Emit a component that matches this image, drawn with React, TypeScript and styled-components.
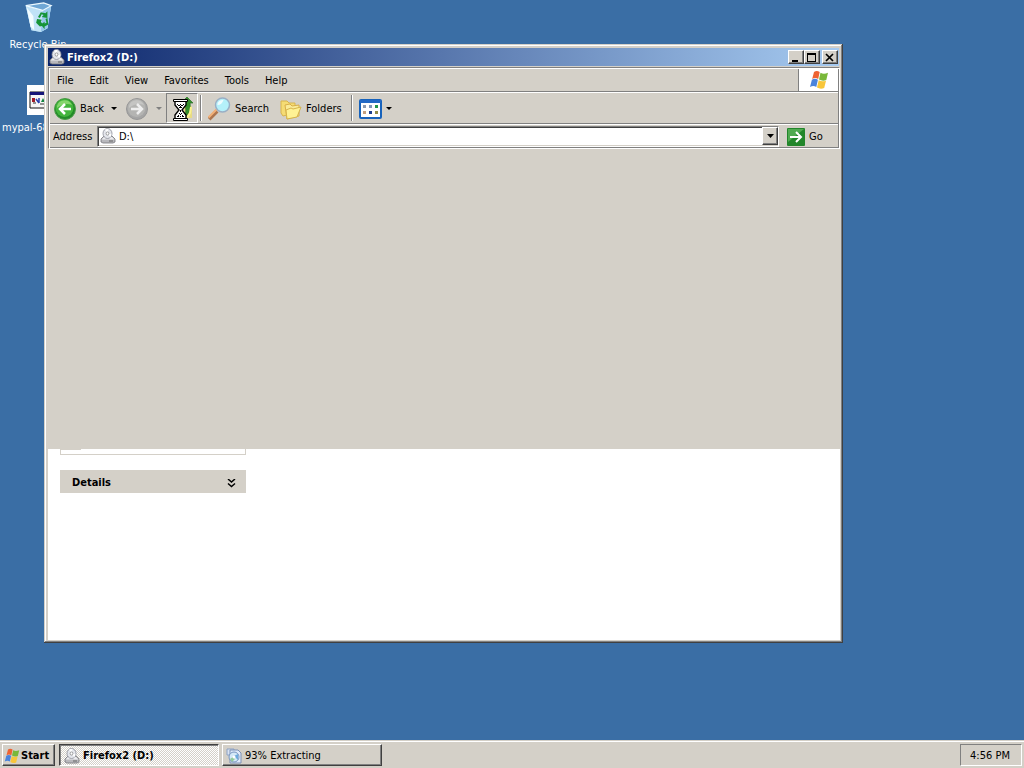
import React from 'react';
import styled, { createGlobalStyle, css } from 'styled-components';

const face = '#d4d0c8';
const shadow = '#808080';

const GlobalStyle = createGlobalStyle`
  * { box-sizing: border-box; }
  html, body, #root { height: 100%; }
  body {
    margin: 0;
    overflow: hidden;
    background: #3a6ea5;
    color: #000;
    font: 11px/14px "DejaVu Sans Condensed", "DejaVu Sans", sans-serif;
    cursor: default;
  }
  button, input { font: inherit; color: inherit; }
  svg { display: block; flex: none; }
`;

const raised = css`
  border: 1px solid;
  border-color: #fff #404040 #404040 #fff;
  box-shadow: inset -1px -1px 0 ${shadow};
`;

const Screen = styled.div`
  display: flex;
  flex-direction: column;
  height: 100vh;
`;

const Desktop = styled.main`
  position: relative;
  flex: 1;
  min-height: 0;
`;

const Shortcut = styled.button<{ $top: number; $labelStart?: boolean }>`
  position: absolute;
  left: 0;
  top: ${(p) => p.$top}px;
  width: 76px;
  display: flex;
  flex-direction: column;
  align-items: center;
  gap: 5px;
  padding: 0 2px;
  border: 0;
  background: none;
  color: #fff;
  white-space: nowrap;
  & > span { align-self: ${(p) => (p.$labelStart ? 'flex-start' : 'center')}; }
`;

const Window = styled.section`
  position: absolute;
  inset: 44px 181px 97px 44px;
  display: flex;
  flex-direction: column;
  padding: 4px 3px 3px 4px;
  background: ${face};
  box-shadow: inset -1px -1px 0 #404040, inset 1px 1px 0 ${face},
    inset -2px -2px 0 ${shadow}, inset 2px 2px 0 #fff;
`;

const TitleBar = styled.header`
  display: flex;
  align-items: center;
  height: 18px;
  margin-right: 1px;
  padding: 0 1px;
  gap: 2px;
  background: linear-gradient(to right, #0a246a, #a6caf0);
  color: #fff;
`;

const Title = styled.h1`
  flex: 1;
  margin: 0;
  padding-top: 1px;
  font-size: 11px;
  line-height: 14px;
  font-weight: bold;
`;

const CaptionGroup = styled.div`
  display: flex;
  gap: 2px;
`;

const CaptionPair = styled.div`
  display: flex;
`;

const CaptionButton = styled.button`
  display: grid;
  place-items: center;
  width: 16px;
  height: 14px;
  padding: 0;
  background: ${face};
  ${raised}
`;

const Rebar = styled.div`
  display: flex;
  flex-direction: column;
  margin: 1px 0 0;
  border: 1px solid ${shadow};
  border-right-color: #fff;
  border-bottom-color: #fff;
  box-shadow: inset 1px 1px 0 #fff, inset -1px 0 0 ${shadow};
  padding: 1px 1px 0;
`;

const Band = styled.div<{ $height: number }>`
  display: flex;
  align-items: center;
  height: ${(p) => p.$height}px;
  border-bottom: 1px solid ${shadow};
  & + & { border-top: 1px solid #fff; }
`;

const MenuList = styled.nav`
  display: flex;
  flex: 1;
  padding: 1px 0 0 1px;
`;

const MenuItem = styled.button`
  padding: 0 6px;
  margin-right: 4px;
  border: 0;
  background: none;
`;

const Brand = styled.div`
  display: grid;
  place-items: center;
  width: 40px;
  align-self: stretch;
  border-left: 1px solid ${shadow};
  background: #fff;
`;

const ToolButton = styled.button<{ $width: number; $pressed?: boolean }>`
  display: flex;
  align-items: center;
  align-self: stretch;
  flex: none;
  gap: 4px;
  width: ${(p) => p.$width}px;
  padding: 1px 0 0 3px;
  border: 1px solid transparent;
  background: none;
  white-space: nowrap;
  ${(p) => p.$pressed && css`border-color: ${shadow} #fff #fff ${shadow};`}
`;

const Divider = styled.span`
  flex: none;
  width: 2px;
  height: 26px;
  margin: 0 2px;
  border-left: 1px solid ${shadow};
  border-right: 1px solid #fff;
`;

const Arrow = styled.span<{ $gap: number; $muted?: boolean }>`
  flex: none;
  width: 6px;
  height: 3px;
  margin-left: ${(p) => p.$gap}px;
  background: ${(p) => (p.$muted ? shadow : '#000')};
  clip-path: polygon(0 0, 100% 0, 50% 100%);
`;

const AddressLabel = styled.label`
  width: 47px;
  padding: 1px 0 0 3px;
`;

const AddressBox = styled.div`
  display: flex;
  align-items: center;
  flex: 1;
  height: 21px;
  padding-left: 2px;
  background: #fff;
  border: 1px solid;
  border-color: ${shadow} #fff #fff ${shadow};
  box-shadow: inset 1px 1px 0 #404040, inset 0 -1px 0 ${face};
`;

const AddressInput = styled.input`
  flex: 1;
  min-width: 0;
  height: 17px;
  padding: 1px 3px 0;
  border: 0;
  outline: 0;
  background: none;
`;

const DropButton = styled.button`
  display: grid;
  place-items: center;
  width: 16px;
  height: 18px;
  padding: 0;
  background: ${face};
  ${raised}
`;

const GoButton = styled.button`
  display: flex;
  align-items: center;
  gap: 4px;
  width: 59px;
  padding: 1px 0 0 8px;
  border: 0;
  background: none;
`;

const Pane = styled.div`
  display: flex;
  flex-direction: column;
  flex: 1;
  min-height: 0;
  padding-top: 2px;
  background: linear-gradient(${face}, ${face}) top / 100% 2px no-repeat #fff;
`;

const Unpainted = styled.div`
  flex: 0 0 61%;
  background: ${face};
`;

const SidePanel = styled.aside`
  width: 186px;
  margin-left: 12px;
`;

const TaskGroup = styled.div`
  height: 6px;
  margin-bottom: 15px;
  border: 1px solid ${face};
  border-top: 0;
  &::before {
    content: '';
    display: block;
    width: 20px;
    height: 1px;
    background: ${face};
  }
`;

const GroupHeader = styled.button`
  display: flex;
  align-items: center;
  justify-content: space-between;
  width: 100%;
  height: 23px;
  padding: 3px 10px 0 12px;
  border: 0;
  background: ${face};
  font-weight: bold;
`;

const Taskbar = styled.footer`
  display: flex;
  align-items: center;
  height: 28px;
  padding: 2px 2px 0;
  background: ${face};
  box-shadow: inset 0 1px 0 ${face}, inset 0 2px 0 #fff;
`;

const StartButton = styled.button`
  display: flex;
  align-items: center;
  width: 53px;
  height: 22px;
  margin-right: 4px;
  padding: 1px 0 0 1px;
  gap: 1px;
  background: ${face};
  font-weight: bold;
  ${raised}
`;

const TaskButton = styled.button<{ $active?: boolean }>`
  display: flex;
  align-items: center;
  gap: 3px;
  width: 160px;
  height: 22px;
  margin-right: 3px;
  padding: 1px 4px 0 3px;
  background: ${face};
  ${raised}
  ${(p) => p.$active && css`
    padding: 2px 4px 0;
    font-weight: bold;
    border-color: #404040 #fff #fff #404040;
    box-shadow: inset 1px 1px 0 ${shadow};
    background: repeating-conic-gradient(#fff 0 25%, ${face} 0 50%) 0 0 / 2px 2px;
  `}
`;

const Tray = styled.div`
  width: 62px;
  height: 22px;
  margin-left: auto;
  padding: 4px 2px 0 0;
  text-align: center;
  border: 1px solid;
  border-color: ${shadow} #fff #fff ${shadow};
`;

const DriveIcon = () => (
  <svg width="16" height="16" viewBox="0 0 16 16" aria-hidden="true">
    <path d="M1 11 4 8h8l3 3v3l-2 1H3l-2-1z" fill="#b8b8bc" stroke="#77777c" strokeWidth=".8" />
    <path d="M1.500 11.500h13L12 9H4z" fill="#ececef" />
    <ellipse cx="7.500" cy="5.500" rx="4.500" ry="5" fill="#e4e6ec" stroke="#8c8e98" strokeWidth=".8" />
    <path d="M7.500 5.500 5 1.500 8.500.8zM7.500 5.500l3 3.700 1-3.200z" fill="#fff" />
    <ellipse cx="7.500" cy="5.500" rx="1.400" ry="1.600" fill="#fff" stroke="#888" strokeWidth=".8" />
    <path d="M9 13h4" stroke="#666" />
  </svg>
);

const FlagIcon = ({ size }: { size: number }) => (
  <svg width={size} height={size} viewBox="0 0 20 20" aria-hidden="true">
    <path d="M5 2c2-1.300 3.700-1.200 5.700 0L9.200 9c-2-1.300-4-1.300-6 0z" fill="#ee6332" />
    <path d="M11.500 2.800c2.200 1.200 4.500 1.200 7.500 0L17.300 10c-2.500 1-5 .8-7.300-.5z" fill="#79b83a" />
    <path d="M2.900 9.800c2-1.300 4-1.300 6 0L7.300 17c-2-1.500-4-1.500-6.300 0z" fill="#4a83dc" />
    <path d="M9.700 10.300c2.200 1.200 4.700 1.300 7.300.4L15.200 18c-2.500 1-5 .8-7.200-.5z" fill="#f8c63a" />
  </svg>
);

const BinIcon = () => (
  <svg width="32" height="32" viewBox="0 0 32 34" aria-hidden="true">
    <path d="M3 5 22 3l8 2-4 24-7 4-10-2z" fill="#a8d4f1" />
    <path d="m3 5 18 5 9-5-4 24-7 4-10-2z" fill="#c0e2f7" />
    <path d="m21 10 9-5-4 24-7 4z" fill="#97c8ec" />
    <path d="M3 5 22 2l8 3-9 5z" fill="#6fa7d5" stroke="#eefaff" strokeWidth="1.300" />
    <path d="m4 7 4 20 4 4-1-15z" fill="#f2fcff" />
    <path d="m16 17 3-5 5 1 2-2v7l-6-1 2-2-2-1-2 4zM15 19l5 1-1 2 3 4-4 1-4-4zM26 18l1 7-4 2v3l-4-5 4-3v2l2-1-1-4z" fill="#159438" />
  </svg>
);

const ArchiveIcon = () => (
  <svg width="30" height="32" viewBox="0 0 30 32" aria-hidden="true">
    <path d="M4 1h26v30H4z" fill="#fff" />
    <path d="M7 8h22v16H7z" fill="#f6f6f6" stroke="#111" />
    <path d="M7 8h22v3H7z" fill="#151578" />
    <path d="M9 14h3v4H9z" fill="#a01a26" />
    <path d="m13 15 3 4M16 14v5" stroke="#253dad" strokeWidth="1.500" />
    <path d="m18 18 2-4 2 4z" fill="#148440" />
    <path d="M10 19h3M17 20h4" stroke="#333" />
  </svg>
);

const RoundArrow = ({ forward }: { forward?: boolean }) => (
  <svg width="22" height="22" viewBox="0 0 22 22" aria-hidden="true">
    <circle cx="11" cy="11" r="10.500" fill={forward ? '#a5a5a5' : '#238b28'} stroke={forward ? '#979797' : '#4d9b49'} />
    <circle cx="10.500" cy="10" r="9" fill={forward ? '#b4b4b2' : '#43b43c'} />
    <path d="M3 8a8 8 0 0 1 15-1C13 5 8 6 3 10z" fill={forward ? '#c5c5c3' : '#85d66c'} />
    <path d={forward ? 'M5 11h11M11 6l5 5-5 5' : 'M17 11H6M11 6l-5 5 5 5'} fill="none" stroke={forward ? '#eee' : '#fff'} strokeWidth="2.500" />
  </svg>
);

const UpWaitIcon = () => (
  <svg width="24" height="26" viewBox="0 0 24 26" aria-hidden="true">
    <path d="M14 9h6l2 2v11h-8z" fill="#e8dc83" />
    <path d="M11 7 17 1l6 6h-3c1 7-1 11-5 14 1-5 1-9 0-14z" fill="#35912c" stroke="#286f25" strokeWidth=".7" />
    <path d="m21 11-1 6-3 5" fill="none" stroke="#faf291" strokeWidth="2" />
    <path d="M5 5h11v4l-4 5 4 5v4H5v-4l4-5-4-5z" fill="#fff" stroke="#000" strokeWidth="1.400" />
    <path d="M3.500 3.500h14v2h-14zM3.500 22.500h14v2h-14z" fill="#fff" stroke="#000" />
    <path d="M7 8h1v1H7zM10 8h1v1h-1zM13 8h1v1h-1zM8 9h2v1H8zM11 9h2v1h-2zM10 10h1v2h-1zM9 11h1v1H9zM11 11h1v1h-1zM10 14h1v2h-1zM9 17h1v1H9zM11 17h1v1h-1zM10 18h1v1h-1zM8 19h1v1H8zM12 19h1v1h-1zM7 20h2v1H7zM10 20h1v1h-1zM12 20h2v1h-2z" fill="#000" />
  </svg>
);

const SearchIcon = () => (
  <svg width="23" height="24" viewBox="0 0 23 24" aria-hidden="true">
    <path d="m1 22 8-8" stroke="#ad7650" strokeWidth="4" />
    <path d="m.5 20.500 8-8" stroke="#f2b178" strokeWidth="2" />
    <circle cx="14.500" cy="8" r="7" fill="#b4f0fa" stroke="#9aafc5" strokeWidth="1.500" />
    <path d="M9.500 8c0-4 3-5 6-5-1 3-3 5-6 5z" fill="#effcff" />
  </svg>
);

const FolderIcon = () => (
  <svg width="22" height="22" viewBox="0 0 22 22" aria-hidden="true">
    <path d="M1 3h6l2 2h6v10L3 18 1 15z" fill="#f5dc74" stroke="#d8b44d" />
    <path d="m5 7 5-1 2 2 7-1v11L7 21z" fill="#faeb98" stroke="#d8ae49" />
    <path d="m6 12 5-2 2 1 8-2-4 10-10 2z" fill="#fff294" stroke="#d6b44b" />
  </svg>
);

const ViewsIcon = () => (
  <svg width="23" height="20" viewBox="0 0 23 20" aria-hidden="true">
    <rect x="1" y="1" width="21" height="18" rx="1" fill="#fff" stroke="#1762bb" strokeWidth="2" />
    <path d="M1 1h21v3H1z" fill="#2369c5" />
    <path d="M4 6h3v3H4z" fill="#8d9bb0" /><path d="M10 6h3v3h-3z" fill="#8296b8" />
    <path d="M16 6h3v3h-3z" fill="#24974a" /><path d="M4 12h3v3H4z" fill="#c4a080" />
    <path d="M10 12h3v3h-3z" fill="#1c3e91" /><path d="M16 12h3v3h-3z" fill="#8f8a4a" />
  </svg>
);

const GoIcon = () => (
  <svg width="18" height="18" viewBox="0 0 18 18" aria-hidden="true">
    <rect width="18" height="18" rx="1" fill="#22862b" />
    <path d="M1 1h16L1 14z" fill="#50aa51" />
    <path d="M3 9h11M9 4l5 5-5 5" fill="none" stroke="#fff" strokeWidth="2" />
  </svg>
);

const InstallerIcon = () => (
  <svg width="16" height="16" viewBox="0 0 16 16" aria-hidden="true">
    <path d="M1 1h7v6H1z" fill="#d9e3f3" stroke="#8ca2c4" />
    <path d="M4 2h8l3 3v10H4z" fill="#e0eafb" stroke="#7d91b5" />
    <circle cx="8" cy="9" r="5" fill="#d4e8f7" stroke="#7a97c1" />
    <path d="m8 8 4-2v6z" fill="#6eaadd" /><path d="m4 11 3-2 2 2-3 3z" fill="#92c99b" />
    <circle cx="8" cy="9" r="1.500" fill="#fff" />
  </svg>
);

const Chevrons = () => (
  <svg width="9" height="9" viewBox="0 0 9 9" aria-hidden="true">
    <path d="m1 0 3.500 3L8 0M1 4.500l3.500 3L8 4.500" fill="none" stroke="#000" strokeWidth="1.500" />
  </svg>
);

const menus = ['File', 'Edit', 'View', 'Favorites', 'Tools', 'Help'];

export default function App() {
  return (
    <Screen>
      <GlobalStyle />
      <Desktop>
        <Shortcut $top={1}><BinIcon /><span>Recycle Bin</span></Shortcut>
        <Shortcut $top={84} $labelStart><ArchiveIcon /><span>mypal-68</span></Shortcut>
        <Window aria-label="Firefox2 (D:)">
          <TitleBar>
            <DriveIcon />
            <Title>Firefox2 (D:)</Title>
            <CaptionGroup>
              <CaptionPair>
                <CaptionButton aria-label="Minimize">
                  <svg width="10" height="9" viewBox="0 0 10 9"><path d="M1 7h6v2H1z" /></svg>
                </CaptionButton>
                <CaptionButton aria-label="Maximize">
                  <svg width="10" height="9" viewBox="0 0 10 9"><path d="M0 0h9v9H0zM1 2v6h7V2z" fillRule="evenodd" /></svg>
                </CaptionButton>
              </CaptionPair>
              <CaptionButton aria-label="Close">
                <svg width="10" height="9" viewBox="0 0 10 9"><path d="m1 1 7 7M8 1 1 8" stroke="#000" strokeWidth="1.700" /></svg>
              </CaptionButton>
            </CaptionGroup>
          </TitleBar>
          <Rebar>
            <Band $height={23}>
              <MenuList>{menus.map((m) => <MenuItem key={m}>{m}</MenuItem>)}</MenuList>
              <Brand><FlagIcon size={20} /></Brand>
            </Band>
            <Band $height={32}>
              <ToolButton $width={72}><RoundArrow />Back<Arrow $gap={3} /></ToolButton>
              <ToolButton $width={44} aria-label="Forward"><RoundArrow forward /><Arrow $gap={4} $muted /></ToolButton>
              <ToolButton $width={32} $pressed aria-label="Up"><UpWaitIcon /></ToolButton>
              <Divider />
              <ToolButton $width={72}><SearchIcon />Search</ToolButton>
              <ToolButton $width={73}><FolderIcon />Folders</ToolButton>
              <Divider />
              <ToolButton $width={40} aria-label="Views"><ViewsIcon /><Arrow $gap={0} /></ToolButton>
            </Band>
            <Band $height={24}>
              <AddressLabel htmlFor="address">Address</AddressLabel>
              <AddressBox>
                <DriveIcon />
                <AddressInput id="address" defaultValue="D:\" />
                <DropButton aria-label="Show addresses">
                  <svg width="7" height="4" viewBox="0 0 7 4"><path d="M0 0h7L3.500 4z" /></svg>
                </DropButton>
              </AddressBox>
              <GoButton><GoIcon />Go</GoButton>
            </Band>
          </Rebar>
          <Pane>
            <Unpainted />
            <SidePanel>
              <TaskGroup />
              <GroupHeader>Details<Chevrons /></GroupHeader>
            </SidePanel>
          </Pane>
        </Window>
      </Desktop>
      <Taskbar>
        <StartButton><FlagIcon size={16} />Start</StartButton>
        <TaskButton $active><DriveIcon />Firefox2 (D:)</TaskButton>
        <TaskButton><InstallerIcon />93% Extracting</TaskButton>
        <Tray>4:56 PM</Tray>
      </Taskbar>
    </Screen>
  );
}
